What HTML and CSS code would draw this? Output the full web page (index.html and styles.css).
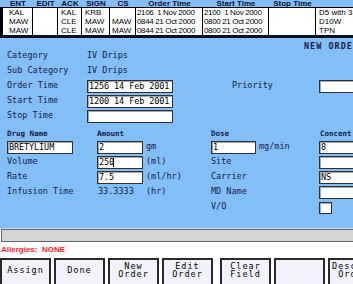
FILE: index.html
```html
<!DOCTYPE html>
<html>
<head>
<meta charset="utf-8">
<link rel="stylesheet" href="styles.css">
</head>
<body>
<div class="screen">
  <div class="orders">
    <div class="ohead">
      <div>ENT</div><div>EDIT</div><div>ACK</div><div>SIGN</div><div>CS</div><div>Order Time</div><div>Start Time</div><div>Stop Time</div><div></div>
    </div>
    <div class="obody">
      <div class="orow">
        <div class="c1">KAL</div><div></div><div>KAL</div><div>KRB</div><div class="c5"></div><div class="t">2106  1 Nov 2000</div><div class="t">2100  1 Nov 2000</div><div></div><div>D5 with 3</div>
      </div>
      <div class="orow">
        <div class="c1">MAW</div><div></div><div>CLE</div><div>MAW</div><div class="c5">MAW</div><div class="t">0844 21 Oct 2000</div><div class="t">0800 21 Oct 2000</div><div></div><div>D10W</div>
      </div>
      <div class="orow">
        <div class="c1">MAW</div><div></div><div>CLE</div><div>MAW</div><div class="c5">MAW</div><div class="t">0844 21 Oct 2000</div><div class="t">0800 21 Oct 2000</div><div></div><div>TPN</div>
      </div>
    </div>
  </div>

  <div class="form">
    <div class="title">NEW ORDER</div>
    <div class="topgrid">
      <div class="lbl">Category</div><div class="lbl">IV Drips</div><div></div><div></div><div></div>
      <div class="lbl">Sub Category</div><div class="lbl">IV Drips</div><div></div><div></div><div></div>
      <div class="lbl">Order Time</div><div class="box w86">1256 14 Feb 2001</div><div></div><div class="lbl">Priority</div><div class="box wide"></div>
      <div class="lbl">Start Time</div><div class="box w86">1200 14 Feb 2001</div><div></div><div></div><div></div>
      <div class="lbl">Stop Time</div><div class="box w86"></div><div></div><div></div><div></div>
    </div>
    <div class="druggrid">
      <div class="small">Drug Name</div><div class="small">Amount</div><div></div><div class="small">Dose</div><div class="small pad1">Concent</div>

      <div class="box w66">BRETYLIUM</div><div class="box w46">2</div><div class="lbl unit">gm</div>
      <div class="dose"><div class="box w45">1</div><div class="lbl unit">mg/min</div></div><div class="box wide">8</div>

      <div class="lbl">Volume</div><div class="box w46">250<span class="caret"></span></div><div class="lbl unit">(ml)</div><div class="lbl">Site</div><div class="box wide"></div>

      <div class="lbl">Rate</div><div class="box w46">7.5</div><div class="lbl unit">(ml/hr)</div><div class="lbl">Carrier</div><div class="box wide">NS</div>

      <div class="lbl">Infusion Time</div><div class="lbl val">33.3333</div><div class="lbl unit">(hr)</div><div class="lbl">MD Name</div><div class="box wide"></div>

      <div></div><div></div><div></div><div class="lbl">V/O</div><div class="check"></div>
    </div>
  </div>
  <div class="light"></div>
  <div class="bar"></div>
  <div class="allergies">Allergies:&nbsp; NONE</div>
  <div class="buttons">
    <div class="btn">Assign</div>
    <div class="btn">Done</div>
    <div class="btn">New<br>Order</div>
    <div class="btn">Edit<br>Order</div>
    <div class="btn group">Clear<br>Field</div>
    <div class="btn"></div>
    <div class="btn">Descrip<br>Order</div>
  </div>
</div>
</body>
</html>
```

FILE: styles.css
```css
* { box-sizing: border-box; margin: 0; padding: 0; }
html, body { width: 353px; height: 284px; overflow: hidden; }
body { background: #ffffff; font-family: "DejaVu Sans Mono", "Liberation Mono", monospace; }

.screen {
  width: 353px;
  height: 284px;
  overflow: hidden;
  display: flex;
  flex-direction: column;
}

/* ---------- order list ---------- */
.orders {
  flex: none;
  width: 440px;
  background: #82bef8;
  font-family: "Liberation Sans", Arial, sans-serif;
  font-size: 8px;
}
.ohead, .orow {
  display: grid;
  grid-template-columns: 30px 25px 24px 28px 26px 67px 66px 47px 127px;
}
.ohead {
  height: 7px;
  padding-left: 3px;
  line-height: 7px;
  overflow: hidden;
  font-weight: bold;
  color: #0c1030;
}
.ohead > div { text-align: center; white-space: nowrap; }
.obody {
  background: #ffffff;
  border-left: 3px solid #000000;
  border-top: 1px solid #000000;
  border-bottom: 3px solid #0a1020;
}
.orow { height: 9px; line-height: 9px; color: #000000; }
.orow > div {
  border-right: 1px solid #000000;
  padding-left: 3px;
  white-space: pre;
  overflow: hidden;
}
.orow > .c1 { padding-left: 6px; }
.orow > .c5 { padding-left: 2px; }
.orow > .t { padding-left: 1px; letter-spacing: -0.35px; }

/* ---------- order form ---------- */
.form {
  flex: none;
  height: 190px;
  background: #82bef8;
  padding-left: 7px;
  color: #182048;
  font-size: 8.5px;
  overflow: hidden;
}
.title {
  height: 12px;
  padding-top: 4px;
  padding-left: 297px;
  line-height: 8px;
  font-weight: bold;
  letter-spacing: 1px;
  white-space: nowrap;
}
.topgrid {
  display: grid;
  grid-template-columns: 80px 86px 59px 87px 80px;
  grid-auto-rows: 15px;
}
.druggrid {
  display: grid;
  grid-template-columns: 90px 46px 68px 108px 80px;
  grid-template-rows: 16px;
  grid-auto-rows: 15px;
}
.lbl { line-height: 10px; white-space: nowrap; }
.small {
  font-size: 7.5px;
  font-weight: bold;
  line-height: 8px;
  padding-top: 5px;
  white-space: nowrap;
}
.pad1 { padding-left: 1px; }
.unit { padding-left: 3px; }
.val { padding-left: 1px; color: #182048; }
.dose { display: flex; }

.box {
  height: 13px;
  background: #ffffff;
  border: 1px solid #303030;
  box-shadow: inset 1px 1px 0 #a8a8a8;
  color: #000000;
  line-height: 11px;
  padding-left: 1px;
  letter-spacing: -0.1px;
  white-space: nowrap;
  overflow: hidden;
}
.w86 { width: 86px; }
.w66 { width: 66px; }
.w46 { width: 46px; }
.w45 { width: 45px; flex: none; }
.wide { width: 60px; }
.caret {
  display: inline-block;
  width: 1px;
  height: 9px;
  background: #000000;
  vertical-align: -2px;
  margin-left: -1px;
}
.check {
  width: 13px;
  height: 12px;
  margin-top: 1px;
  background: #ffffff;
  border: 1px solid #303030;
  box-shadow: inset 1px 1px 0 #a8a8a8;
}

/* ---------- bottom ---------- */
.light { flex: none; height: 1px; background: #c4def8; }
.bar {
  flex: none;
  height: 13px;
  margin-left: 1px;
  width: 360px;
  border: 1px solid #666666;
  background: #d6d6d6;
}
.allergies {
  flex: none;
  height: 16px;
  line-height: 16px;
  padding-left: 1px;
  font-family: "Liberation Sans", Arial, sans-serif;
  font-size: 8px;
  font-weight: bold;
  color: #ff2020;
}
.buttons {
  flex: none;
  display: flex;
  gap: 3px;
  width: 400px;
}
.btn {
  flex: none;
  width: 51px;
  height: 30px;
  padding-bottom: 6px;
  border: 2px solid #2a2a2a;
  background: #f2f2fc;
  display: flex;
  align-items: center;
  justify-content: center;
  text-align: center;
  font-size: 8.5px;
  line-height: 8.5px;
  letter-spacing: 1px;
  color: #000000;
  white-space: nowrap;
}
.btn.group { margin-left: 4px; }
```
